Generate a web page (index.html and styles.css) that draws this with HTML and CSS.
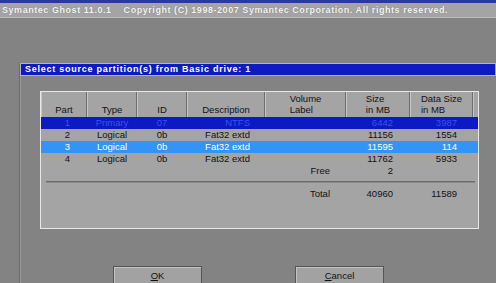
FILE: index.html
```html
<!DOCTYPE html>
<html>
<head>
<meta charset="UTF-8">
<title>Symantec Ghost</title>
<link rel="stylesheet" href="styles.css">
</head>
<body>
<div class="topbar">
	<span class="prog">Symantec Ghost 11.0.1</span><span class="copy">Copyright (C) 1998-2007 Symantec Corporation. All rights reserved.</span>
</div>

<div class="dialog">
	<div class="dtitle">Select source partition(s) from Basic drive: 1</div>

	<div class="panel">
		<div class="hdr">
			<div class="hc"><span>Part</span></div>
			<div class="hc"><span>Type</span></div>
			<div class="hc"><span>ID</span></div>
			<div class="hc"><span>Description</span></div>
			<div class="hc"><span>Volume<br>Label</span></div>
			<div class="hc"><span>Size<br>in MB</span></div>
			<div class="hc"><span>Data Size<br>in MB</span></div>
			<div class="hc last"></div>
		</div>

		<div class="row sel">
			<div class="c num">1</div><div class="c mid">Primary</div><div class="c mid">07</div><div class="c desc">NTFS</div><div class="c lab"></div><div class="c num2">6442</div><div class="c num3">3987</div>
		</div>
		<div class="row">
			<div class="c num">2</div><div class="c mid">Logical</div><div class="c mid">0b</div><div class="c desc">Fat32 extd</div><div class="c lab"></div><div class="c num2">11156</div><div class="c num3">1554</div>
		</div>
		<div class="row hi">
			<div class="c num">3</div><div class="c mid">Logical</div><div class="c mid">0b</div><div class="c desc">Fat32 extd</div><div class="c lab"></div><div class="c num2">11595</div><div class="c num3">114</div>
		</div>
		<div class="row">
			<div class="c num">4</div><div class="c mid">Logical</div><div class="c mid">0b</div><div class="c desc">Fat32 extd</div><div class="c lab"></div><div class="c num2">11762</div><div class="c num3">5933</div>
		</div>
		<div class="row">
			<div class="c num"></div><div class="c mid"></div><div class="c mid"></div><div class="c desc"></div><div class="c lab">Free</div><div class="c num2">2</div><div class="c num3"></div>
		</div>

		<div class="sep"></div>

		<div class="row">
			<div class="c num"></div><div class="c mid"></div><div class="c mid"></div><div class="c desc"></div><div class="c lab">Total</div><div class="c num2">40960</div><div class="c num3">11589</div>
		</div>
	</div>

	<div class="buttons">
		<div class="btn"><u>O</u>K</div>
		<div class="btn"><u>C</u>ancel</div>
	</div>
</div>
</body>
</html>
```

FILE: styles.css
```css
html, body{
	margin:0;
	padding:0;
}
body{
	width:496px;
	height:283px;
	overflow:hidden;
	background-color:#838383;
	font-family:"Liberation Sans", Arial, sans-serif;
}

/* barra superior */
.topbar{
	height:14px;
	border-top:3px solid #2a3a9a;
	border-bottom:1px solid #bdbdbd;
	background-color:#a4a4a4;
	color:#f6f6f6;
	font-weight:bold;
	font-size:9px;
	line-height:14px;
	letter-spacing:0.55px;
	padding-left:2px;
	white-space:nowrap;
	text-shadow:0 0 1px #6a6a6a;
}
.topbar .copy{
	margin-left:12px;
}

/* ventana */
.dialog{
	margin:45px 0 0 19px;
	width:476px;
	height:220px;
	border-left:1px solid #6c6c6c;
	box-shadow:inset 1px 0 #9a9a9a;
}
.dtitle{
	height:11px;
	border:1px solid #b4b4c4;
	background-color:#0c1cc0;
	color:#ffffff;
	font-weight:bold;
	font-size:9px;
	line-height:11px;
	letter-spacing:0.75px;
	padding-left:4px;
	white-space:nowrap;
}

.panel{
	margin:15px 0 0 20px;
	width:437px;
	height:136px;
	border:1px solid #e8e8e8;
	background-color:#a4a4a4;
	font-size:9.5px;
	color:#111;
}
.hdr, .row{
	display:grid;
	grid-template-columns:46px 50px 50px 78px 81px 64px 63px 5px;
}
.hdr{
	height:25px;
}
.hc{
	border-left:1px solid #c6c6c6;
	border-right:1px solid #6e6e6e;
	text-align:center;
	display:flex;
	align-items:flex-end;
	justify-content:center;
	padding-bottom:2px;
	line-height:11px;
}
.hc span{
	text-align:left;
}
.hc.last{
	border-right:none;
}

.row{
	height:12px;
	line-height:12px;
	white-space:nowrap;
}
.c{
	overflow:hidden;
}
.num{
	text-align:right;
	padding-right:17px;
}
.mid{
	text-align:center;
}
.desc{
	text-align:right;
	padding-right:15px;
}
.lab{
	text-align:right;
	padding-right:16px;
}
.num2{
	text-align:right;
	padding-right:17px;
}
.num3{
	text-align:right;
	padding-right:16px;
}
.row.sel{
	background-color:#0c1ac4;
	color:#3b52ea;
}
.row.hi{
	background-color:#3294f6;
	color:#ffffff;
}

.sep{
	margin:4px 3px 5px 5px;
	height:1px;
	border-top:1px solid #6a6a6a;
	background-color:#8a8a8a;
}

.buttons{
	display:flex;
	gap:93px;
	margin:37px 0 0 93px;
}
.btn{
	width:87px;
	height:20px;
	border:1px solid #555;
	box-shadow:inset 1px 1px #c4c4c4;
	background-color:#a2a2a2;
	text-align:center;
	font-size:9.5px;
	line-height:17px;
	color:#111;
}
```
